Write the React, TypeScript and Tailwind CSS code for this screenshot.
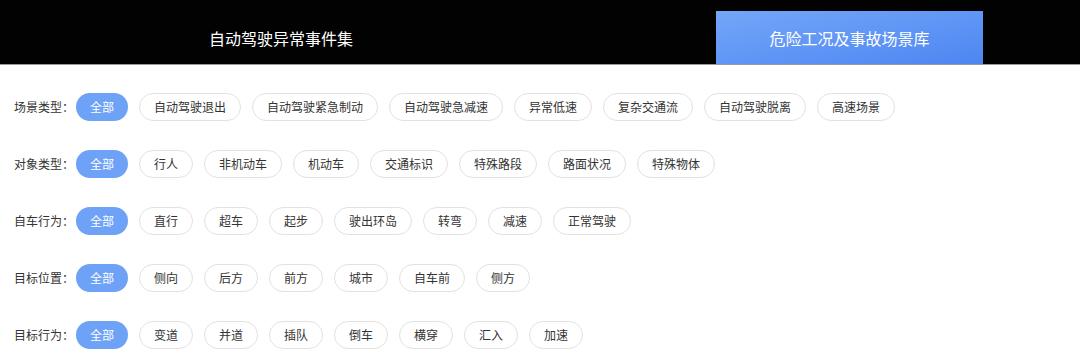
const ROWS: { label: string; items: string[] }[] = [
  {
    label: "场景类型：",
    items: ["全部", "自动驾驶退出", "自动驾驶紧急制动", "自动驾驶急减速", "异常低速", "复杂交通流", "自动驾驶脱离", "高速场景"],
  },
  {
    label: "对象类型：",
    items: ["全部", "行人", "非机动车", "机动车", "交通标识", "特殊路段", "路面状况", "特殊物体"],
  },
  {
    label: "自车行为：",
    items: ["全部", "直行", "超车", "起步", "驶出环岛", "转弯", "减速", "正常驾驶"],
  },
  {
    label: "目标位置：",
    items: ["全部", "侧向", "后方", "前方", "城市", "自车前", "侧方"],
  },
  {
    label: "目标行为：",
    items: ["全部", "变道", "并道", "插队", "倒车", "横穿", "汇入", "加速"],
  },
];

function Chip({ text, active }: { text: string; active: boolean }) {
  return active ? (
    <span className="flex h-7 items-center rounded-full bg-[#6ea2f7] px-[14px] text-xs text-white">{text}</span>
  ) : (
    <span className="flex h-7 items-center rounded-full border border-[#e2e2e2] px-[14px] text-xs text-[#333]">
      {text}
    </span>
  );
}

export default function App() {
  return (
    <div
      className="h-[359px] w-[1080px] overflow-hidden bg-white"
      style={{ fontFamily: '"Noto Sans CJK SC", "Noto Sans", sans-serif' }}
    >
      <div className="flex h-[65px] border-b border-[#9a9a9a] bg-[#020202]">
        <div className="flex w-[562px] items-center justify-center pt-[11px] text-base text-white">
          自动驾驶异常事件集
        </div>
        <div className="ml-[154px] mt-[11px] flex w-[267px] items-center justify-center bg-gradient-to-br from-[#74a6f8] to-[#4d86f2] text-base text-white">
          危险工况及事故场景库
        </div>
      </div>

      <div className="flex flex-col gap-[29px] pl-[14px] pt-[28px]">
        {ROWS.map((row) => (
          <div key={row.label} className="flex items-center">
            <span className="w-[62px] text-xs text-[#333]">{row.label}</span>
            <div className="flex gap-[11px]">
              {row.items.map((item, i) => (
                <Chip key={item} text={item} active={i === 0} />
              ))}
            </div>
          </div>
        ))}
      </div>
    </div>
  );
}
